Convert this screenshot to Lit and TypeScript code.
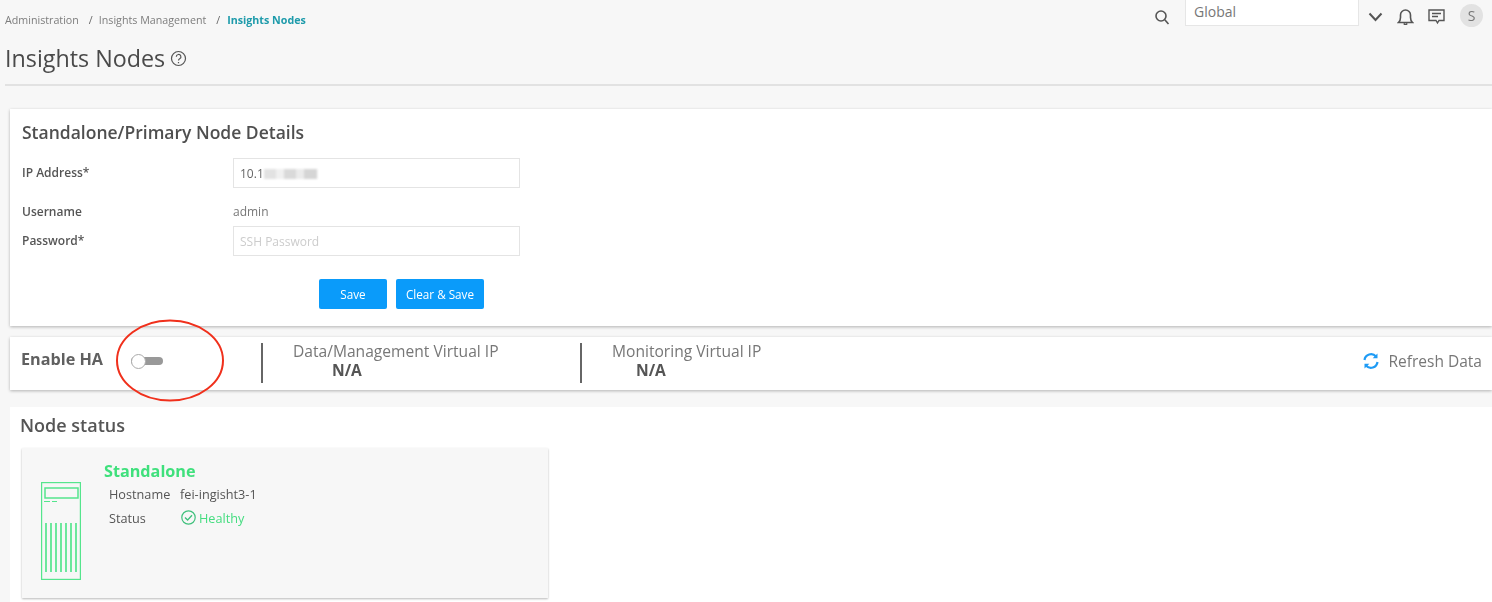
import { LitElement, html, css } from "lit";
import { customElement } from "lit/decorators.js";

@customElement("app-root")
export class AppRoot extends LitElement {
  static styles = css`
    :host { display: block; width: 1492px; height: 602px; overflow: hidden; position: relative;
      background: #f7f7f7; font-family: "Open Sans", "Noto Sans", sans-serif; color: #555; }
    * { box-sizing: border-box; }
    .page { height: 100%; filter: blur(0.35px); }
    .header { height: 86px; margin-left: 5px; border-bottom: 2px solid #e2e2e2; display: flex; justify-content: space-between; align-items: flex-start; }
    .crumbs { display: flex; align-items: center; height: 13px; margin-top: 14px; font-size: 10.7px; line-height: 13px; color: #7d7d7d; white-space: pre; }
    .crumbs .sep { margin: 0 6px 0 10px; color: #666; }
    .crumbs .cur { color: #1e9bab; font-weight: 700; margin-left: 1px; }
    .title { display: flex; align-items: center; gap: 5px; margin-top: 14px; font-size: 23.3px; line-height: 34px; color: #4a4a4a; }
    .top { display: flex; align-items: flex-start; padding-right: 9px; }
    .select { width: 174px; height: 26px; margin-left: 15px; padding: 3px 8px; background: #fff; border: 1px solid #e6e6e6; border-top: 0; font-size: 14px; line-height: 18px; color: #777; }
    .ic { display: block; fill: none; stroke: #555; stroke-width: 1.6; }
    .ic-help { stroke-width: 1.2; }
    .ic-search { margin-top: 9px; }
    .ic-chev { margin: 12px 0 0 9px; stroke-width: 2; }
    .ic-bell { margin: 8px 0 0 14px; }
    .ic-msg { margin: 8px 0 0 14px; stroke-width: 1.4; }
    .avatar { width: 23px; height: 23px; margin: 4px 0 0 15px; border-radius: 50%; background: #e2e2e2; color: #777; font-size: 14px; line-height: 23px; text-align: center; }
    .card { margin: 23px 0 0 10px; height: 217px; padding: 12px 12px 0; background: #fff; box-shadow: 0 1px 3px rgba(0,0,0,.28); }
    h2 { margin: 0; font-size: 17.5px; line-height: 23px; font-weight: 600; color: #4f4f4f; }
    .form { display: grid; grid-template-columns: 211px 287px; margin-top: 14px; font-size: 12px; color: #555; }
    .form label { font-weight: 600; line-height: 16px; }
    .lab1 { margin-top: 7px; } .lab2 { margin-top: 16px; } .lab3 { margin-top: 13px; }
    .val { margin-top: 16px; color: #777; line-height: 16px; }
    .input { height: 30px; border: 1px solid #e4e4e4; padding: 1px 6px 0; font-size: 12px; color: #666; display: flex; align-items: center; background: #fff; }
    .input2 { margin-top: 6px; color: #ccc; }
    .smudge { width: 54px; height: 10px; filter: blur(1.2px);
      background: linear-gradient(90deg, #e2e2e2 0 12px, #f0f0f0 12px 20px, #d9d9d9 20px 32px, #ebebeb 32px 40px, #d5d5d5 40px 53px, #fafafa 53px); }
    .btns { display: flex; gap: 9px; margin: 23px 0 0 297px; }
    button { height: 30px; border: 0; border-radius: 2px; background: #0a9bfa; color: #fff; font: 11.7px "Open Sans", sans-serif; padding: 0; }
    .b1 { width: 68px; } .b2 { width: 88px; }
    .ha { margin: 11px 0 0 10px; height: 53px; display: flex; align-items: stretch; background: #fff; box-shadow: 0 1px 3px rgba(0,0,0,.28); }
    .ha-label { width: 121px; padding: 11px 0 0 11px; font-size: 16.2px; line-height: 22px; font-weight: 700; color: #606060; }
    .toggle { width: 130px; padding-top: 17px; }
    .track { position: relative; width: 32px; height: 8px; margin-top: 3px; border-radius: 4px; background: #999; }
    .knob { position: absolute; left: 0; top: -3px; width: 15px; height: 15px; border-radius: 50%; background: #fff; border: 1px solid #aaa; }
    .vip { border-left: 2px solid #666; margin: 6px 0 7px; padding-left: 30px; font-size: 15.6px; line-height: 19px; color: #777; white-space: nowrap; }
    .vip-in { margin-top: -1px; }
    .vip1 { width: 319px; } .vip2 { flex: 1; }
    .vip b { display: block; font-weight: 700; color: #555; }
    .vip1 b { padding-left: 39px; } .vip2 b { padding-left: 24px; }
    .refresh { display: flex; align-items: center; gap: 9px; padding: 0 10px 5px 0; font-size: 15.5px; color: #777; }
    .status { margin: 17px 0 0 10px; height: 195px; padding: 6px 0 0 10px; background: #fff; }
    .status h2 { font-size: 18px; line-height: 24px; color: #555; }
    .node { width: 526px; height: 150px; margin: 11px 0 0 2px; padding: 13px 0 0 19px; display: flex; background: #f7f7f7; box-shadow: 0 1px 2px rgba(0,0,0,.28); }
    .srv { margin-top: 21px; flex: none; }
    .info { margin-left: 23px; font-size: 12.7px; color: #555; }
    .info h3 { margin: 0; font-size: 16.2px; line-height: 20px; font-weight: 700; color: #3fe07c; }
    .rows { display: grid; grid-template-columns: 71px auto; row-gap: 7px; padding: 5px 0 0 5px; line-height: 17px; }
    .ok { display: flex; align-items: center; gap: 3px; color: #45dd80; margin-left: 1px; }
    .ok svg { margin-top: -3px; }
    .ring { position: absolute; left: 116px; top: 319px; pointer-events: none; }
  `;

  render() {
    return html`
      <div class="page">
      <div class="header">
        <div>
          <div class="crumbs"><span>Administration</span><span class="sep">/</span><span>Insights Management</span><span class="sep">/</span><span class="cur">Insights Nodes</span></div>
          <div class="title">Insights Nodes
            <svg class="ic ic-help" width="17" height="17" viewBox="0 0 17 17">
              <circle cx="8.5" cy="8.5" r="7"></circle>
              <path d="M6.3 6.8a2.3 2.3 0 1 1 3.4 2c-.8.5-1.2.9-1.2 1.7M8.5 12v1.2"></path>
            </svg>
          </div>
        </div>
        <div class="top">
          <svg class="ic ic-search" width="16" height="16" viewBox="0 0 16 16"><circle cx="7" cy="7" r="5"></circle><path d="M10.8 10.8 14.5 15"></path></svg>
          <div class="select">Global</div>
          <svg class="ic ic-chev" width="15" height="10" viewBox="0 0 15 10"><path d="M1.5 1.5 7.5 8l6-6.5"></path></svg>
          <svg class="ic ic-bell" width="17" height="17" viewBox="0 0 17 17"><path d="M1.5 14.5c1.4-1.3 2-2.5 2-5V7a5 5 0 0 1 10 0v2.5c0 2.5.6 3.7 2 5zM7 15.5a1.6 1.6 0 0 0 3 0"></path></svg>
          <svg class="ic ic-msg" width="17" height="17" viewBox="0 0 17 17"><path d="M1 2h15v10.500h-5l-1.500 2.500L8 12.500H1zM4 5.500h9M4 8.500h6"></path></svg>
          <div class="avatar">S</div>
        </div>
      </div>

      <section class="card">
        <h2>Standalone/Primary Node Details</h2>
        <div class="form">
          <label class="lab1">IP Address*</label>
          <div class="input">10.1<div class="smudge"></div></div>
          <label class="lab2">Username</label>
          <div class="val">admin</div>
          <label class="lab3">Password*</label>
          <div class="input input2">SSH Password</div>
        </div>
        <div class="btns"><button class="b1">Save</button><button class="b2">Clear &amp; Save</button></div>
      </section>

      <section class="ha">
        <div class="ha-label">Enable HA</div>
        <div class="toggle"><div class="track"><div class="knob"></div></div></div>
        <div class="vip vip1"><div class="vip-in">Data/Management Virtual IP<b>N/A</b></div></div>
        <div class="vip vip2"><div class="vip-in">Monitoring Virtual IP<b>N/A</b></div></div>
        <div class="refresh">
          <svg width="18" height="18" viewBox="0 0 18 18" fill="none" stroke="#1e9bf5" stroke-width="2.2">
            <path d="M2.5 8A6.600 6.600 0 0 1 14 4.500M15.500 10A6.600 6.600 0 0 1 4 13.500"></path>
            <path d="M15.500 1.500v4.800h-4.800zM2.500 16.500v-4.800h4.800z" fill="#1e9bf5" stroke="none"></path>
          </svg>
          Refresh Data
        </div>
      </section>

      <section class="status">
        <h2>Node status</h2>
        <div class="node">
          <svg class="srv" width="40" height="98" viewBox="0 0 40 98" fill="none" stroke="#55e58d" stroke-width="1.2">
            <rect x=".6" y=".6" width="38.8" height="96.800"></rect>
            <rect x="4" y="6" width="33" height="10" stroke-width="1.5"></rect>
            <path d="M3 19.500h6M11 19.500h5"></path>
            <path d="M5 41v49M10 41v49M15 41v49M20 41v49M25 41v49M30 41v49M35 41v49" stroke-width="1.7"></path>
          </svg>
          <div class="info">
            <h3>Standalone</h3>
            <div class="rows">
              <span>Hostname</span><span>fei-ingisht3-1</span>
              <span>Status</span>
              <span class="ok">
                <svg width="15" height="15" viewBox="0 0 15 15" fill="none" stroke="#3fc07c" stroke-width="1.2"><circle cx="7.5" cy="7.5" r="6.7"></circle><path d="M4 7.500l2.600 2.600L11 5.200" stroke-width="1.4"></path></svg>
                Healthy
              </span>
            </div>
          </div>
        </div>
      </section>
      </div>

      <svg class="ring" width="108" height="83" viewBox="0 0 108 83" fill="none" stroke="#f0301c" stroke-width="2">
        <ellipse cx="54" cy="41.5" rx="53" ry="40"></ellipse>
      </svg>
    `;
  }
}
